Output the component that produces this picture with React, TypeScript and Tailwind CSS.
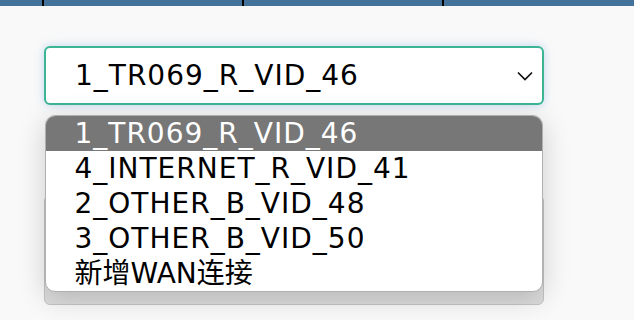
import { useState } from "react";

const OPTIONS = [
  "1_TR069_R_VID_46",
  "4_INTERNET_R_VID_41",
  "2_OTHER_B_VID_48",
  "3_OTHER_B_VID_50",
  "新增WAN连接",
];

const font = {
  fontFamily: '"DejaVu Sans", "Noto Sans CJK SC", sans-serif',
};

export default function App() {
  const [selected] = useState(0);

  return (
    <div className="h-[320px] w-[634px] overflow-hidden bg-[#f9f9f9]" style={font}>
      {/* top nav strip */}
      <div className="flex h-[6px] bg-[#43739a]">
        <div className="w-[42px]" />
        <div className="w-[200px] border-l-2 border-black" />
        <div className="w-[200px] border-l-2 border-black" />
        <div className="flex-1 border-l-2 border-black" />
      </div>

      <div className="relative px-[44px] pt-[40px]">
        {/* select (focused) */}
        <div className="flex h-[59px] w-[500px] items-center justify-between rounded-[6px] border-2 border-[#3cb594] bg-white pl-[29px] pr-[9px] shadow-[0_0_10px_rgba(80,150,220,0.35)]">
          <span className="text-[28px] leading-none tracking-[1px] text-black">
            {OPTIONS[selected]}
          </span>
          <svg width="16" height="10" viewBox="0 0 16 10" fill="none">
            <path d="M1 1.5 8 8.5 15 1.5" stroke="#111" strokeWidth="1.7" />
          </svg>
        </div>

        {/* field underneath the open list */}
        <div className="mt-[90px] h-[110px] w-[500px] rounded-[6px] border border-[#c4c4c4] bg-[#dcdcdc]" />

        {/* open option list */}
        <ul className="absolute left-[45px] top-[109px] w-[498px] overflow-hidden rounded-[10px] border-[1.5px] border-[#b0b0b0] bg-white shadow-[0_6px_28px_rgba(0,0,0,0.18)]">
          {OPTIONS.map((opt, i) => (
            <li
              key={opt}
              className={`flex h-[35px] items-center pl-[28.5px] text-[28px] leading-none ${
                i === OPTIONS.length - 1 ? "tracking-normal" : "tracking-[1px]"
              } ${i === selected ? "bg-[#777777] text-white" : "text-black"}`}
            >
              {opt}
            </li>
          ))}
        </ul>
      </div>
    </div>
  );
}
